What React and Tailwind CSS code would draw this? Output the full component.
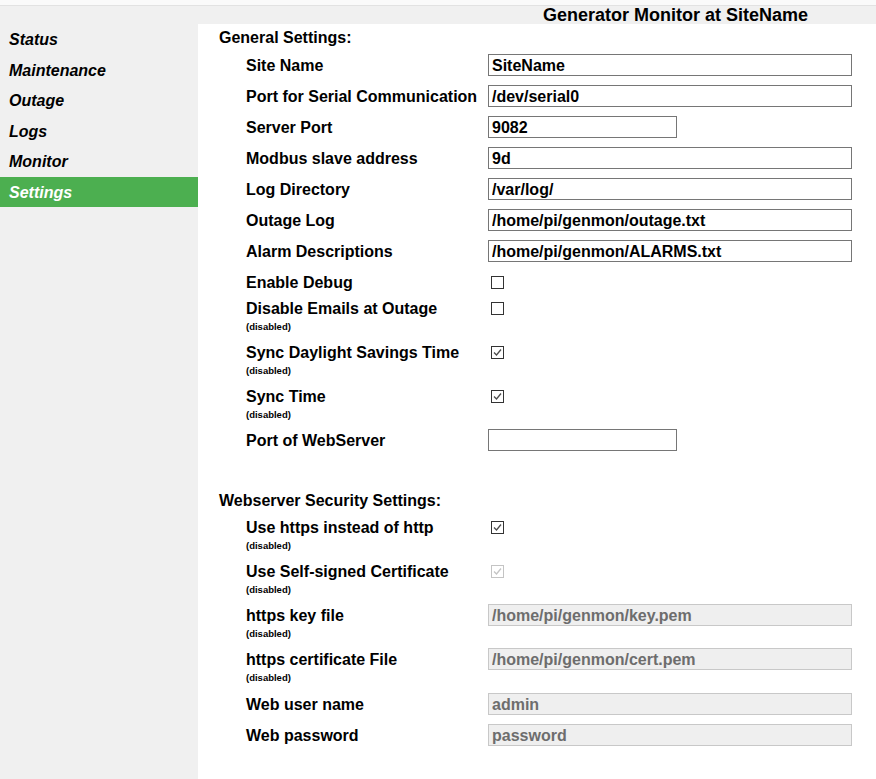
import React from 'react';

const navItems = ['Status', 'Maintenance', 'Outage', 'Logs', 'Monitor', 'Settings'];

function Checkbox({ checked, disabled }) {
  const line = disabled ? '#c4c4c4' : '#333333';
  const tick = disabled ? '#c4c4c4' : '#4d4d4d';
  return (
    <span
      className="ml-[3px] block w-[13px] h-[13px] border bg-white"
      style={{ borderColor: line }}
    >
      {checked && (
        <svg width="11" height="11" viewBox="0 0 11 11" className="block">
          <path d="M2 5.5 L4.5 8 L9 2.5" fill="none" stroke={tick} strokeWidth="1.3" />
        </svg>
      )}
    </span>
  );
}

function TextBox({ value, short, disabled }) {
  return (
    <input
      readOnly
      defaultValue={value}
      className={`${short ? 'w-[189px]' : 'w-[364px]'} h-[22px] px-[3px] pt-[1px] text-[16px] font-bold outline-none border ${
        disabled ? 'bg-[#efefef] border-[#c8c8c8] text-[#6d6d6d]' : 'bg-white border-[#767676] text-black'
      }`}
    />
  );
}

function Row({ label, sub, mt = 'mt-[9px]', children }) {
  return (
    <div className={`grid grid-cols-[242px_1fr] pl-[48px] ${mt}`}>
      <div>
        <div className="h-[22px] leading-[24px] text-[16px] font-bold whitespace-nowrap">{label}</div>
        {sub && <div className="mt-[1px] h-[12px] leading-[14px] text-[9.5px] font-bold">(disabled)</div>}
      </div>
      <div className="h-[22px] flex items-center">{children}</div>
    </div>
  );
}

export default function App() {
  return (
    <div className="min-h-screen flex flex-col bg-[#f0f0f0] text-black" style={{ fontFamily: '"Liberation Sans", Arial, sans-serif' }}>
      <div className="h-[5px] bg-[#fafafa] border-b border-[#e2e2e2] box-content" />
      <div className="flex flex-1">
        {/* Side navigation */}
        <aside className="w-[198px] shrink-0 pt-[18px]">
          {navItems.map((item) => (
            <div
              key={item}
              className={`h-[30.5px] leading-[32px] pl-[9px] text-[16px] font-bold italic overflow-hidden ${
                item === 'Settings' ? 'bg-[#4caf50] text-white' : ''
              }`}
            >
              {item}
            </div>
          ))}
        </aside>

        <main className="flex-1 flex flex-col">
          <div className="h-[18px] leading-[18px] pl-[345px] text-[18px] font-bold whitespace-nowrap">
            Generator Monitor at SiteName
          </div>

          <div className="flex-1 bg-white pt-[4px]">
            <div className="pl-[21px] leading-[20px] text-[16px] font-bold">General Settings:</div>
            <Row label="Site Name" mt="mt-[6px]"><TextBox value="SiteName" /></Row>
            <Row label="Port for Serial Communication"><TextBox value="/dev/serial0" /></Row>
            <Row label="Server Port"><TextBox value="9082" short /></Row>
            <Row label="Modbus slave address"><TextBox value="9d" /></Row>
            <Row label="Log Directory"><TextBox value="/var/log/" /></Row>
            <Row label="Outage Log"><TextBox value="/home/pi/genmon/outage.txt" /></Row>
            <Row label="Alarm Descriptions"><TextBox value="/home/pi/genmon/ALARMS.txt" /></Row>
            <Row label="Enable Debug"><Checkbox /></Row>
            <Row label="Disable Emails at Outage" sub mt="mt-[4px]"><Checkbox /></Row>
            <Row label="Sync Daylight Savings Time" sub><Checkbox checked /></Row>
            <Row label="Sync Time" sub><Checkbox checked /></Row>
            <Row label="Port of WebServer"><TextBox value="" short /></Row>

            <div className="mt-[40px] pl-[21px] leading-[20px] text-[16px] font-bold">Webserver Security Settings:</div>
            <Row label="Use https instead of http" sub mt="mt-[5px]"><Checkbox checked /></Row>
            <Row label="Use Self-signed Certificate" sub><Checkbox checked disabled /></Row>
            <Row label="https key file" sub><TextBox value="/home/pi/genmon/key.pem" disabled /></Row>
            <Row label="https certificate File" sub><TextBox value="/home/pi/genmon/cert.pem" disabled /></Row>
            <Row label="Web user name" mt="mt-[10px]"><TextBox value="admin" disabled /></Row>
            <Row label="Web password"><TextBox value="password" disabled /></Row>
          </div>
        </main>
      </div>
    </div>
  );
}
